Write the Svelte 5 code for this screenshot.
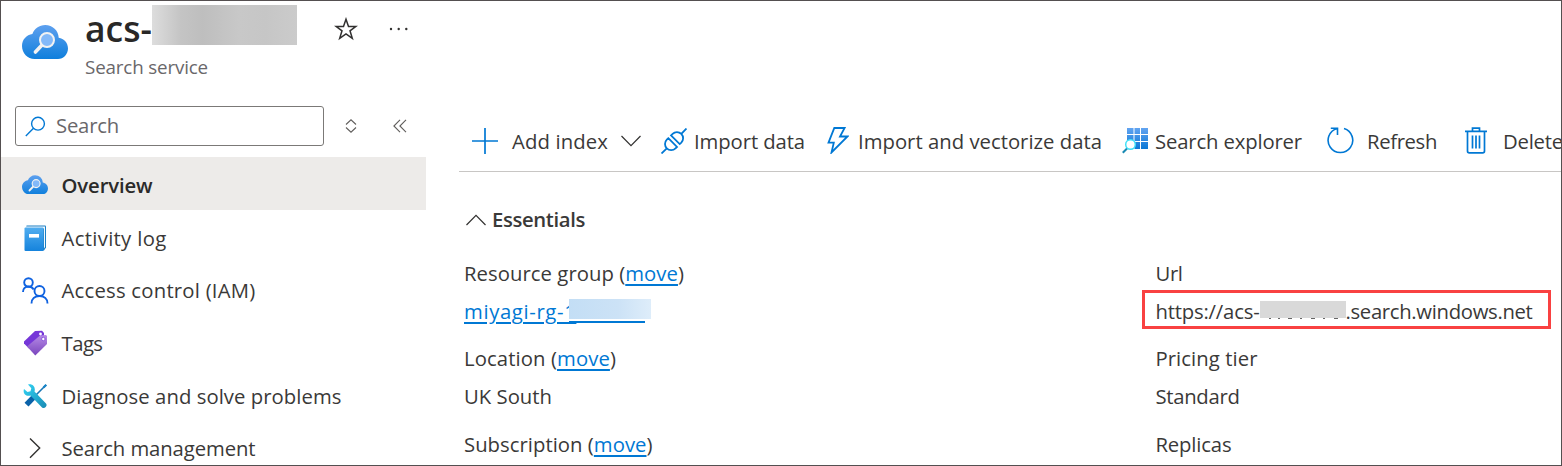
<script>
  // Spreads a label over the given width through its letter spacing.
  function fit(node, width) {
    const n = node.textContent.length;
    const natural = node.getBoundingClientRect().width;
    node.style.letterSpacing = (width - natural) / n + 'px';
  }

  const menu = [
    { icon: 'cloud', label: 'Overview', w: 91, active: true },
    { icon: 'log', label: 'Activity log', w: 105 },
    { icon: 'people', label: 'Access control (IAM)', w: 194 },
    { icon: 'tags', label: 'Tags', w: 41 },
    { icon: 'tools', label: 'Diagnose and solve problems', w: 280 },
    { icon: 'chevron', label: 'Search management', w: 194 }
  ];

  const left = [
    { label: 'Resource group', w: 220, value: '' },
    { label: 'Location', w: 152, value: 'UK South', vw: 88 },
    { label: 'Subscription', w: 188.5 }
  ];
</script>

{#snippet cloud(w, h)}
  <svg width={w} height={h} viewBox="0 0 46 34">
    <defs>
      <linearGradient id="cloudFill" x1="0" y1="0" x2="0" y2="1">
        <stop offset="0" stop-color="#5ea0ef" /><stop offset="1" stop-color="#0f7fdc" />
      </linearGradient>
    </defs>
    <path fill="url(#cloudFill)" d="M46 23.5C46 18 42 13.5 36.700 12.800 36.500 5.500 30.600 0 23.200 0 17.300 0 12.300 3.600 10.400 9 4.500 9.700 0 14.700 0 21c0 7 5.500 13 12.500 13H36C41.500 34 46 29.300 46 23.500z" />
    <path d="M20.500 19.500 13.400 27" stroke="#f2f2f2" stroke-width="3.600" stroke-linecap="round" />
    <circle cx="25" cy="15" r="7" fill="#83b9f9" stroke="#f2f2f2" stroke-width="2" />
  </svg>
{/snippet}

<div class="frame">
  <aside>
    <header>
      <div class="logo">{@render cloud(46, 34)}</div>
      <div class="title">
        <div class="name">
          <h1><span use:fit={67}>acs-</span></h1>
          <span class="mask"></span>
          <svg class="star" width="24" height="24" viewBox="0 0 24 24" fill="none" stroke="#323130" stroke-width="1.500">
            <path d="M12 2.200 14.500 9.400h7.500l-6 4.400 2.300 7.500L12 16.800l-6.300 4.500 2.300-7.500-6-4.400h7.500z" />
          </svg>
          <svg class="dots" width="20" height="4" viewBox="0 0 20 4" fill="#323130">
            <circle cx="2" cy="2" r="1.200" /><circle cx="9.700" cy="2" r="1.200" /><circle cx="17.300" cy="2" r="1.200" />
          </svg>
        </div>
        <div class="sub"><span use:fit={123}>Search service</span></div>
      </div>
    </header>

    <div class="filter">
      <div class="box">
        <svg width="21" height="21" viewBox="0 0 21 21" fill="none" stroke="#0078d4" stroke-width="1.400">
          <circle cx="13" cy="7.700" r="6.400" /><path d="M8.500 12.300.8 20" />
        </svg>
        <span use:fit={63}>Search</span>
      </div>
      <svg class="sort" width="12" height="14" viewBox="0 0 12 14" fill="none" stroke="#605e5c" stroke-width="1.100">
        <path d="M1 5.500 6 .8l5 4.700M1 8.500l5 4.700 5-4.700" />
      </svg>
      <svg class="fold" width="14" height="14" viewBox="0 0 14 14" fill="none" stroke="#605e5c" stroke-width="1.100">
        <path d="M7 .8.900 7 7 13.200M13 .8 6.900 7l6.100 6.200" />
      </svg>
    </div>

    <nav>
      {#each menu as m}
        <div class="item" class:active={m.active}>
          <span class="ico">
            {#if m.icon === 'cloud'}
              {@render cloud(26, 19.500)}
            {:else if m.icon === 'log'}
              <svg width="26" height="26" viewBox="0 0 26 26">
                <defs><linearGradient id="logFill" x1="0" y1="0" x2="0" y2="1"><stop offset="0" stop-color="#50adf0" /><stop offset="1" stop-color="#1583dc" /></linearGradient></defs>
                <path d="M4.500.500H23q1 0 1 1v21L22 25.500H4z" fill="#1b7fc4" />
                <path d="M4.500 1.500H23V22l-1 1.500V3.500L4 3z" fill="#f2f8fc" />
                <rect x="2.500" y="2.500" width="19" height="23.500" rx="1" fill="url(#logFill)" />
                <rect x="7" y="9" width="10" height="3.600" fill="#fff" />
              </svg>
            {:else if m.icon === 'people'}
              <svg width="27" height="27" viewBox="0 0 27 27" fill="none" stroke="#0f62e0" stroke-width="1.900">
                <circle cx="6.500" cy="5.500" r="4.300" /><path d="M1 15c0-3.300 2.300-5.500 5.500-5.500 2.300 0 4.200 1.200 5.200 3" />
                <circle cx="17.500" cy="14" r="5" /><path d="M9.500 26.500c0-4.500 3.300-7.500 8-7.500s8 3 8 7.500" />
              </svg>
            {:else if m.icon === 'tags'}
              <svg width="26" height="26" viewBox="0 0 26 26">
                <defs><linearGradient id="tagFill" x1="0" y1="0" x2="0" y2="1"><stop offset="0" stop-color="#b68be6" /><stop offset="1" stop-color="#7a45bd" /></linearGradient></defs>
                <path d="M13 1 20 .800 22 3v7L7 18.500 2 13.500v-2z" fill="#7536d8" />
                <path d="M18 5.500 24 5l1 1v8L13.300 25.500 5 16.500z" fill="url(#tagFill)" />
                <circle cx="18.500" cy="4" r="1.400" fill="#fff" /><circle cx="21.300" cy="9" r="1.700" fill="#fff" stroke="#7536d8" stroke-width=".7" />
              </svg>
            {:else if m.icon === 'tools'}
              <svg width="26" height="26" viewBox="0 0 26 26">
                <defs><linearGradient id="toolFill" x1="0" y1="0" x2="1" y2="1"><stop offset="0" stop-color="#32d4f5" /><stop offset="1" stop-color="#198ab3" /></linearGradient></defs>
                <path d="M24 2 13 13" stroke="#1976b5" stroke-width="1.600" /><path d="M21.500 4.500 24.300 1.700" stroke="#1985c8" stroke-width="2.200" />
                <path d="M12 13.800 4.500 21.700" stroke="#0a62a9" stroke-width="5.400" />
                <path d="M6 1.500c4-1.500 8 2 6.500 7L24 20.500c2 2.500-1.500 6-4 4L8.500 12.500C4 14 .500 10.500 2 6l3.500 3 3-.800.800-3z" fill="url(#toolFill)" />
              </svg>
            {:else}
              <svg width="26" height="26" viewBox="0 0 26 26" fill="none" stroke="#323130" stroke-width="1.400"><path d="m8 2.500 9.700 9.600L8 21.700" /></svg>
            {/if}
          </span>
          <span class="text" use:fit={m.w}>{m.label}</span>
        </div>
      {/each}
    </nav>
  </aside>

  <main>
    <div class="toolbar">
      <svg width="26" height="26" viewBox="0 0 26 26" stroke="#0078d4" stroke-width="1.700"><path d="M13 0v26M0 13h26" /></svg>
      <span style="margin-left:14px" use:fit={96}>Add index</span>
      <svg style="margin-left:13px" width="20" height="12" viewBox="0 0 20 12" fill="none" stroke="#323130" stroke-width="1.200"><path d="m.5 1 9.500 9.700L19.500 1" /></svg>
      <svg style="margin-left:20px" width="26" height="26" viewBox="0 0 26 26" fill="none" stroke="#0078d4" stroke-width="1.800">
        <path d="M.500 25.500 5.800 20.400M20.300 5.900 25.500.500" />
        <path d="m7.300 10.200 8.700 8.700-1.500 1.500a6.150 6.150 0 0 1-8.700-8.700zM10 7.400l8.700 8.700 1.600-1.500a6.150 6.150 0 0 0-8.700-8.700z" />
      </svg>
      <span style="margin-left:7px" use:fit={111}>Import data</span>
      <svg style="margin-left:22px" width="22" height="27" viewBox="0 0 22 27" fill="none" stroke="#0078d4" stroke-width="1.800"><path d="M7.300 1h10.300L13 9.500h7.500L4.500 25.500l2.300-9.800H1.500z" /></svg>
      <span style="margin-left:9px" use:fit={244}>Import and vectorize data</span>
      <svg style="margin-left:20px" width="27" height="27" viewBox="0 0 27 27">
        <defs><linearGradient id="gridFill" gradientUnits="userSpaceOnUse" x1="0" y1="0" x2="0" y2="22"><stop offset="0" stop-color="#66a6f2" /><stop offset="1" stop-color="#0b78d6" /></linearGradient></defs>
        <path fill="url(#gridFill)" d="M5 1h6.500v6H5zM12.500 1H18v6h-5.500zM19 1h7v6h-7zM5 8h6.500v6H5zM12.500 8H18v6h-5.500zM19 8h7v6h-7zM5 15h6.500v7H5zM12.500 15H18v7h-5.500zM19 15h7v7h-7z" />
        <path d="M5.500 21 .8 25.800" stroke="#198ab3" stroke-width="2" /><circle cx="8.500" cy="17.500" r="4.800" fill="#fff" stroke="#42e0f7" stroke-width="1.500" />
      </svg>
      <span style="margin-left:6px" use:fit={147}>Search explorer</span>
      <svg style="margin-left:25px" width="27" height="27" viewBox="0 0 27 27" fill="none" stroke="#0078d4" stroke-width="1.600"><path d="M17 1.500A12.300 12.300 0 1 1 10.200 1.400M3.800 1.200h6.700v6.700" /></svg>
      <span style="margin-left:13px" use:fit={70}>Refresh</span>
      <svg style="margin-left:28px" width="22" height="27" viewBox="0 0 22 27" fill="none" stroke="#0078d4" stroke-width="1.700"><path d="M0 4.300h22M7.500 4V1.200h7V4M2.500 4.500V24q0 1.800 1.800 1.800h13.400q1.800 0 1.800-1.800V4.500M7.500 8.500v13M11 8.500v13M14.500 8.500v13" /></svg>
      <span style="margin-left:16px" use:fit={60}>Delete</span>
    </div>

    <div class="essentials">
      <svg width="20" height="12" viewBox="0 0 20 12" fill="none" stroke="#323130" stroke-width="1.200"><path d="m.5 11 9.500-9.700L19.500 11" /></svg>
      <b use:fit={93}>Essentials</b>
    </div>

    <div class="grid">
      <div>
        {#each left as p, i}
          <div class="pair">
            <div class="line"><span use:fit={p.w}>{p.label} (<a href="#move">move</a>)</span></div>
            {#if i === 0}
              <div class="line group"><a class="rg" href="#group" use:fit={112}>miyagi-rg-1</a><i class="tail"></i><i class="bluemask"></i></div>
            {:else if p.value}
              <div class="line"><span use:fit={p.vw}>{p.value}</span></div>
            {/if}
          </div>
        {/each}
      </div>
      <div class="right">
        <div class="pair">
          <div class="line"><span use:fit={27}>Url</span></div>
          <div class="line url">
            <span use:fit={104}>https://acs-</span>
            <svg width="86" height="19" viewBox="0 0 86 19">
              <path d="M9 17.500h2M18 17.500h2M28 17.500h4M40 17.500h2M51 17.500h4M63 17.500h2M74 17.500h4" stroke="#666" stroke-width="1.200" />
              <rect width="86" height="17" fill="#d9d9d9" />
            </svg>
            <span use:fit={187}>.search.windows.net</span>
          </div>
        </div>
        <div class="pair">
          <div class="line"><span use:fit={102}>Pricing tier</span></div>
          <div class="line"><span use:fit={84}>Standard</span></div>
        </div>
        <div class="pair"><div class="line"><span use:fit={76}>Replicas</span></div></div>
      </div>
    </div>
  </main>
</div>

<style>
  :global(body) { background: #fff; overflow: hidden; }
  .frame {
    box-sizing: border-box; width: 1562px; height: 466px; overflow: hidden;
    border: 1px solid #544f50; display: flex; background: #fff; color: #3a3938;
    font: 20.300px/26px "Open Sans", "Noto Sans", sans-serif; white-space: nowrap;
  }
  svg { display: block; flex: none; }
  span, b { flex: none; }
  aside { width: 458px; flex: none; }
  header { display: flex; height: 105px; }
  .logo { padding: 24px 17px 0 21px; }
  .name { display: flex; align-items: center; height: 54px; }
  h1 { margin: 0; font-size: 35.500px; line-height: 54px; font-weight: 600; color: #292827; width: 67px; }
  .mask { width: 145px; height: 40px; margin-top: -6px; background: linear-gradient(90deg, #ddd 0, #c4c4c4 20%, #bebebe 35%, #c8c8c8 60%, #c6c6c6 78%, #cbcbcb 100%); }
  .star { margin-left: 37px; margin-top: 2px; }
  .dots { margin-left: 31px; margin-top: 2px; }
  .sub { color: #69676a; font-size: 18.800px; line-height: 26px; margin-top: -1px; }
  .filter { display: flex; align-items: center; height: 40px; padding-left: 14px; }
  .box { box-sizing: border-box; width: 309px; height: 40px; border: 1px solid #7b7977; border-radius: 3px; display: flex; align-items: center; gap: 10px; padding-left: 9px; color: #69676a; }
  .box span { margin-top: -2px; }
  .sort { margin-left: 20.500px; }
  .fold { margin-left: 36.500px; }
  nav { margin-top: 11px; }
  .item { display: flex; align-items: center; width: 425px; height: 52.700px; }
  .active { background: #edebe9; font-weight: 600; color: #2b2a29; }
  .ico { width: 27px; margin-left: 21px; padding-top: 4px; display: flex; }
  .active .ico { padding-top: 2px; }
  .text { margin-left: 12.500px; padding-top: 3px; }
  main { flex: none; width: 1110px; }
  .toolbar { display: flex; align-items: center; height: 61px; margin-top: 109px; padding-left: 13px; border-bottom: 1px solid #c8c6c4; }
  .essentials { display: flex; align-items: center; gap: 6px; height: 26px; margin: 35px 0 0 7px; }
  b { font-weight: 600; margin-top: -2px; }
  .grid { display: grid; grid-template-columns: 691.500px 400px; margin: 27px 0 0 5px; }
  .pair { height: 85px; }
  .pair + .pair + .pair { margin-top: 1px; }
  .line { height: 26px; margin-bottom: 12px; display: flex; align-items: center; }
  a { color: #0078d4; text-decoration: underline; text-decoration-thickness: 2px; text-underline-offset: 3px; }
  .group { position: relative; }
  .rg { width: 105px; }
  .tail { width: 76px; height: 2px; margin-top: 22px; background: #0078d4; }
  .bluemask { position: absolute; left: 105px; top: 1px; width: 82px; height: 20px; background: linear-gradient(90deg, #c3def5, #cce2f6 60%, #deedfa); }
  .url { box-sizing: border-box; width: 409px; height: 39px; margin: -8px 0 0 -13.500px; padding-left: 10.500px; border: 3px solid #f94141; }
  .url > span { padding-top: 2px; }
  .url > svg { margin-top: 1px; }
</style>
